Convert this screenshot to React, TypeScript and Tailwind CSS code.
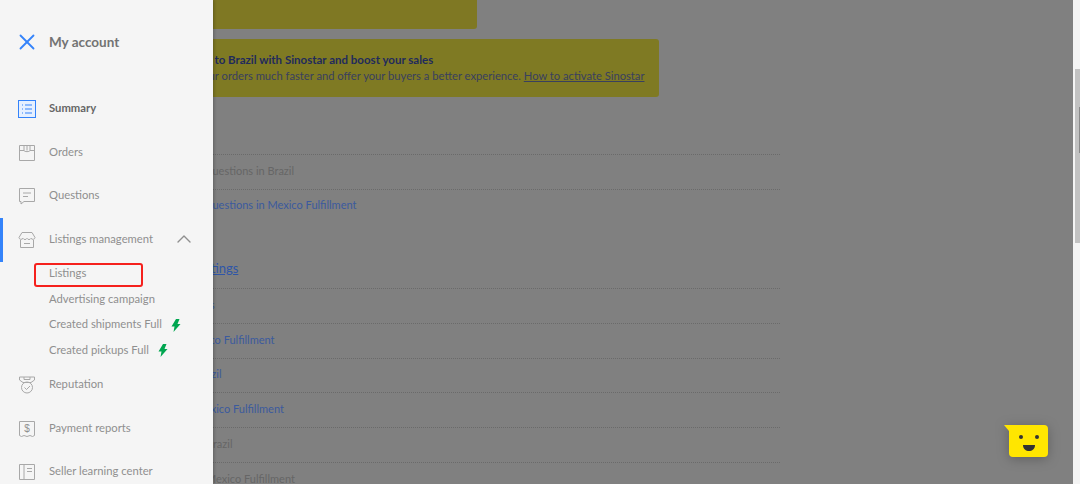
import { ChevronUp, X } from "lucide-react";
import type { ReactNode } from "react";

const stroke = {
  fill: "none",
  stroke: "currentColor",
  strokeWidth: 1,
  width: 18,
  height: 18,
  viewBox: "0 0 18 18",
};

const SummaryIcon = () => (
  <svg {...stroke} className="text-[#3483fa]">
    <rect x="0.5" y="0.5" width="17" height="17" fill="#e6f0ff" />
    <path d="M7 5h7M7 9h7M7 13h7M4 5h1M4 9h1M4 13h1" />
  </svg>
);
const OrdersIcon = () => (
  <svg {...stroke}>
    <path d="M1.500 1.500h15v15h-15zM1.500 6.500h4.500M12 6.500h4.500M6 1.500v5c0 1.500 6 1.500 6 0v-5M9 1.500v5" />
  </svg>
);
const QuestionsIcon = () => (
  <svg {...stroke}>
    <path d="M1.500 1.500h15v13H6l-3 2.500v-2.500H1.500zM5 6h8M5 9.500h5" />
  </svg>
);
const StoreIcon = () => (
  <svg {...stroke}>
    <path d="M4 1.500h10l3 5c0 2-3 2.500-4 .8-1 1.700-3 1.700-4 0-1 1.700-3 1.700-4 0-1 1.700-4 1.200-4-.8zM2.500 9v7.500h13V9M6 12.500h6" />
  </svg>
);
const ReputationIcon = () => (
  <svg {...stroke}>
    <path d="M1.500 1h15v3l-3.500 2.500h-8L1.500 4zM6 1v2.500h6V1" />
    <circle cx="9" cy="11.500" r="5.500" />
    <path d="M6.500 11.500l2 2 3.500-3.500" />
  </svg>
);
const PaymentIcon = () => (
  <svg {...stroke}>
    <path d="M1.500 1.500h15v14l-2 1-2.500-1-3 1-3-1-2.500 1-2-1z" />
    <text x="9" y="11.500" fontSize="10" textAnchor="middle" fill="#8f8f8f" stroke="none" fontFamily="Liberation Sans, sans-serif">$</text>
  </svg>
);
const LearningIcon = () => (
  <svg {...stroke}>
    <path d="M1.500 1.500h15v15h-15zM6 1.500v15M9 5.500h5M9 8.500h5" />
  </svg>
);

const Bolt = () => (
  <svg width="10" height="13" viewBox="0 0 10 13" className="ml-[9px]">
    <path d="M5 0L0.500 7.500h3L2.500 13 9.500 5H6.500L8.500 0z" fill="#00a650" />
  </svg>
);

function NavItem({ icon, label, bold, active, children }: { icon: ReactNode; label: string; bold?: boolean; active?: boolean; children?: ReactNode }) {
  return (
    <div className={`relative flex h-[43.5px] items-center pl-[18px] ${bold ? "font-bold text-[#666666]" : "text-[#8f8f8f]"}`}>
      {active && <div className="absolute top-0 left-0 h-full w-[3px] bg-[#3483fa]" />}
      <div className="mr-[13px] text-[#a8a8a8]">{icon}</div>
      <span className="mb-px text-[11.25px]">{label}</span>
      {children}
    </div>
  );
}

function SubItem({ label, bolt, boxed }: { label: string; bolt?: boolean; boxed?: boolean }) {
  return (
    <div className="relative flex h-[25.5px] items-center pl-[49px] text-[11.25px] text-[#8f8f8f]">
      <span className="mb-px">{label}</span>
      {bolt && <Bolt />}
      {boxed && <div className="absolute top-[1.5px] left-[34px] h-[24px] w-[109px] rounded-[3px] border-2 border-[#f5211d]" />}
    </div>
  );
}

const rows = [
  { text: "Answer questions in Brazil", color: "text-[#666666]" },
  { text: "Answer questions in Mexico Fulfillment", color: "text-[#3b5a9e]" },
];

const rows2 = [
  { text: "Boost ads", color: "text-[#3b5a9e]" },
  { text: "For Mexico Fulfillment", color: "text-[#3b5a9e]" },
  { text: "Ad in Brazil", color: "text-[#3b5a9e]" },
  { text: "Ad in Mexico Fulfillment", color: "text-[#3b5a9e]" },
  { text: "Sales in Brazil", color: "text-[#666666]" },
  { text: "Sales in Mexico Fulfillment", color: "text-[#666666]" },
];

function Row({ text, color }: { text: string; color: string }) {
  return (
    <div className={`flex h-[34.8px] items-center border-t border-dotted border-[#6a6a6a] pb-[2px] pl-[67px] text-[11px] ${color}`}>
      {text}
    </div>
  );
}

export default function App() {
  return (
    <div className="relative flex h-[484px] w-[1080px] overflow-hidden bg-[#808080] font-['Lato','Liberation_Sans',sans-serif]">
      <main className="w-[1073px] pl-[100px]">
        <div className="h-[29px] w-[377px] rounded-b-[3px] bg-[#7f7823]" />
        <div className="mt-[10px] flex h-[58px] w-[559px] flex-col justify-center rounded-[3px] bg-[#7f7a23] pl-[20px] text-[11.2px] leading-[16px] text-[#39405f]">
          <p className="text-[11.5px] font-bold text-[#1f2a5c]">Sell your products to Brazil with Sinostar and boost your sales</p>
          <p>
            You can deliver your orders much faster and offer your buyers a better experience.{" "}
            <span className="underline">How to activate Sinostar</span>
          </p>
        </div>

        <div className="mt-[57px] w-[680px]">
          {rows.map((row) => (
            <Row key={row.text} text={row.text} color={row.color} />
          ))}
        </div>
        <div className="flex h-[64.500px] w-[680px] items-end pb-[10px] pl-[15px] text-[13px] text-[#2f56a8] underline">Optimize your listings</div>
        <div className="w-[680px]">
          {rows2.map((row) => (
            <Row key={row.text} text={row.text} color={row.color} />
          ))}
        </div>
      </main>

      <div className="relative w-[7px] bg-[#f4f4f4]">
        <div className="absolute top-[69px] left-[2px] h-[174px] w-[5px] bg-[#c2c2c2]" />
        <div className="absolute top-[107px] right-0 h-[46px] w-px bg-[#8a8a8a]" />
      </div>

      <aside className="absolute top-0 left-0 h-full w-[213px] bg-[#f5f5f5] shadow-[1px_0_3px_rgba(0,0,0,0.25)]">
        <div className="flex h-[87.500px] items-start pt-[29px] pl-[13.500px]">
          <X className="mr-[9.500px] text-[#3483fa]" size={26} strokeWidth={1.7} />
          <span className="pt-[3px] text-[13.500px] font-bold text-[#737373]">My account</span>
        </div>
        <NavItem icon={<SummaryIcon />} label="Summary" bold />
        <NavItem icon={<OrdersIcon />} label="Orders" />
        <NavItem icon={<QuestionsIcon />} label="Questions" />
        <NavItem icon={<StoreIcon />} label="Listings management" active>
          <ChevronUp className="absolute top-[9px] left-[172px] text-[#8f8f8f]" size={24} strokeWidth={1.4} />
        </NavItem>
        <SubItem label="Listings" boxed />
        <SubItem label="Advertising campaign" />
        <SubItem label="Created shipments Full" bolt />
        <SubItem label="Created pickups Full" bolt />
        <NavItem icon={<ReputationIcon />} label="Reputation" />
        <NavItem icon={<PaymentIcon />} label="Payment reports" />
        <NavItem icon={<LearningIcon />} label="Seller learning center" />
      </aside>

      <svg className="absolute top-[423px] left-[1003px] drop-shadow-[0_2px_6px_rgba(0,0,0,0.25)]" width="47" height="36" viewBox="0 0 47 36">
        <path d="M1 2h40a4 4 0 0 1 4 4v24a4 4 0 0 1-4 4H10a4 4 0 0 1-4-4V8z" fill="#ffe600" />
        <circle cx="18" cy="14" r="2" fill="#333333" />
        <circle cx="34" cy="14" r="2" fill="#333333" />
        <path d="M20 22h12c0 4-3 6-6 6s-6-2-6-6z" fill="#333333" />
      </svg>
    </div>
  );
}
